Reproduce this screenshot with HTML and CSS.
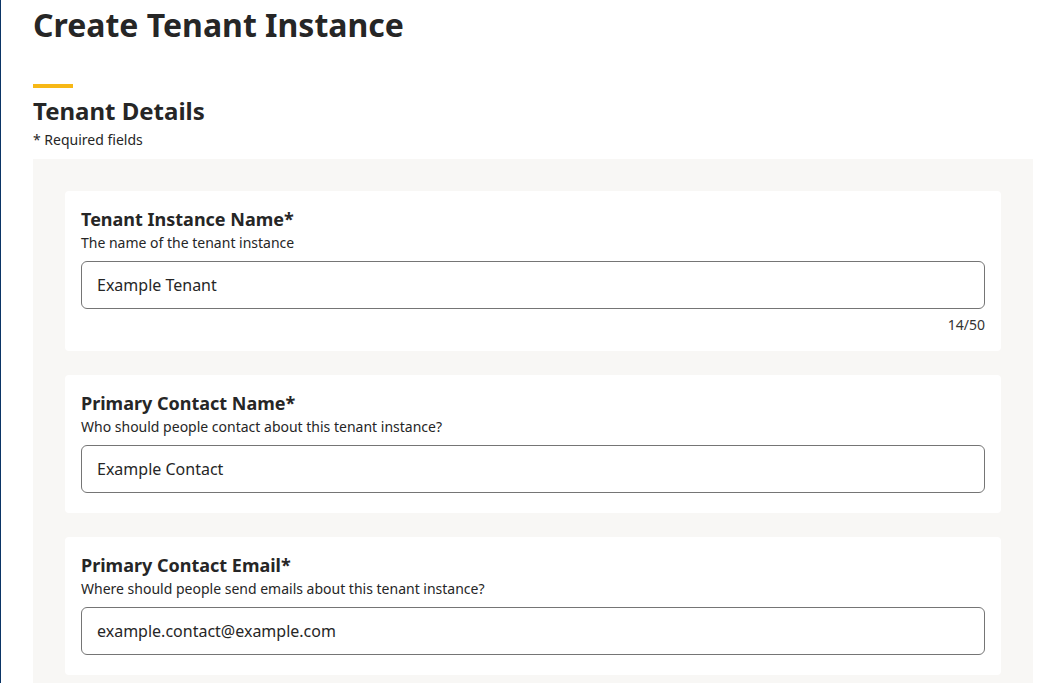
FILE: index.html
```html
<!DOCTYPE html>
<html lang="en">
<head>
<meta charset="utf-8">
<title>Create Tenant Instance</title>
<link rel="stylesheet" href="styles.css">
</head>
<body>
<div class="page">
  <h1 class="title">Create Tenant Instance</h1>
  <div class="accent"></div>
  <h2 class="section-title">Tenant Details</h2>
  <p class="required-note">* Required fields</p>
  <div class="panel">
    <div class="card">
      <label class="label" for="tenant-name">Tenant Instance Name*</label>
      <p class="hint">The name of the tenant instance</p>
      <input class="field" id="tenant-name" type="text" value="Example Tenant">
      <div class="counter">14/50</div>
    </div>
    <div class="card">
      <label class="label" for="contact-name">Primary Contact Name*</label>
      <p class="hint">Who should people contact about this tenant instance?</p>
      <input class="field field-last" id="contact-name" type="text" value="Example Contact">
    </div>
    <div class="card">
      <label class="label" for="contact-email">Primary Contact Email*</label>
      <p class="hint">Where should people send emails about this tenant instance?</p>
      <input class="field field-last" id="contact-email" type="text" value="example.contact@example.com">
    </div>
  </div>
</div>
</body>
</html>
```

FILE: styles.css
```css
* {
  box-sizing: border-box;
}

html, body {
  margin: 0;
  padding: 0;
  background: #ffffff;
}

body {
  font-family: "Noto Sans", "Open Sans", sans-serif;
  color: #262626;
  border-left: 1px solid #0b3566;
  min-height: 683px;
}

.page {
  padding: 0 0 0 32px;
  width: 1032px;
}

.title {
  margin: 3px 0 0;
  font-size: 32px;
  font-weight: 700;
  line-height: normal;
}

.accent {
  width: 40px;
  height: 4px;
  background: #f7b816;
  margin-top: 38px;
}

.section-title {
  margin: 6px 0 0;
  font-size: 24px;
  font-weight: 700;
  line-height: normal;
}

.required-note {
  margin: 3px 0 0;
  font-size: 14px;
  line-height: normal;
}

.panel {
  margin-top: 10px;
  background: #f8f7f5;
  padding: 32px 32px 8px;
  display: flex;
  flex-direction: column;
  gap: 24px;
}

.card {
  background: #ffffff;
  border-radius: 4px;
  padding: 16px 16px 16px;
  display: flex;
  flex-direction: column;
}

.label {
  font-size: 18px;
  font-weight: 700;
  line-height: normal;
}

.hint {
  margin: 2px 0 9px;
  font-size: 14px;
  line-height: normal;
}

.field {
  height: 48px;
  width: 100%;
  border: 1px solid #757575;
  border-radius: 6px;
  padding: 0 15px;
  font-family: "Noto Sans", "Open Sans", sans-serif;
  font-size: 16px;
  color: #262626;
  background: #ffffff;
  outline: none;
}

.field-last {
  margin-bottom: 4px;
}

.counter {
  margin-top: 6px;
  text-align: right;
  font-size: 14px;
  line-height: normal;
  color: #333333;
  margin-bottom: 1px;
}
```
